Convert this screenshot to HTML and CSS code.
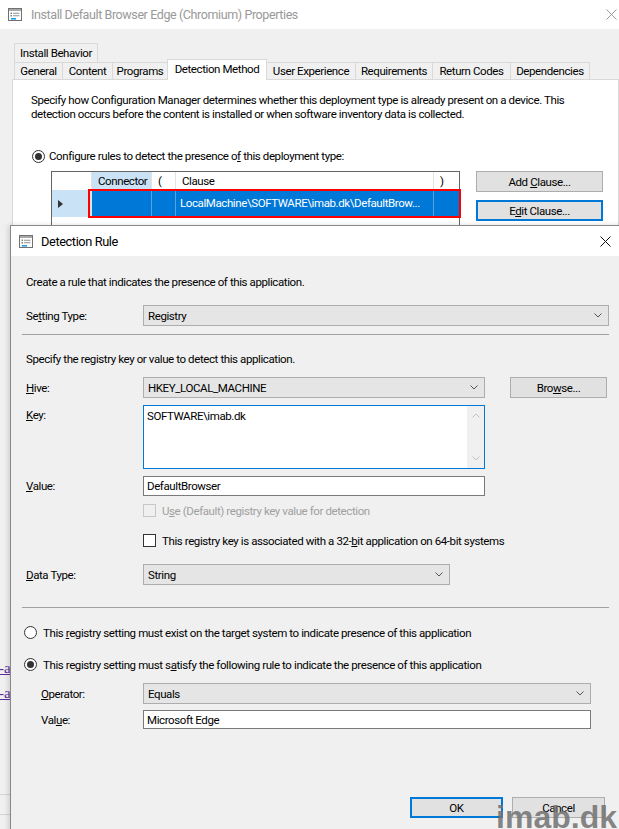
FILE: index.html
```html
<!DOCTYPE html>
<html>
<head>
<meta charset="utf-8">
<link rel="stylesheet" href="styles.css">
</head>
<body>
<div class="parent">
  <div class="ptitle">
    <svg class="wicon" width="14" height="13" viewBox="0 0 14 13"><rect x="0.5" y="0.5" width="13" height="12" fill="#fff" stroke="#707070"/><rect x="1" y="1" width="12" height="2" fill="#a8a8a8"/><rect x="2.5" y="4.5" width="1.5" height="1.5" fill="#808080"/><line x1="5" y1="5.25" x2="11.5" y2="5.25" stroke="#909090"/><rect x="2.5" y="7" width="1.5" height="1.5" fill="#808080"/><line x1="5" y1="7.75" x2="11.5" y2="7.75" stroke="#909090"/><rect x="3" y="10" width="5" height="1.6" fill="#1e9be8"/></svg>
    <span class="ptitle-text">Install Default Browser Edge (Chromium) Properties</span>
    <svg class="pclose" width="11" height="11" viewBox="0 0 11 11"><path d="M0.5 0.5L10.5 10.5M10.5 0.5L0.5 10.5" stroke="#9a9a9a" stroke-width="1" fill="none"/></svg>
  </div>
  <div class="pbody">
    <div class="tabs">
      <div class="tabrow top">
        <div class="tab t-ib">Install Behavior</div>
      </div>
      <div class="tabrow">
        <div class="tab t-gen">General</div>
        <div class="tab t-con">Content</div>
        <div class="tab t-pro">Programs</div>
        <div class="tab t-det active">Detection Method</div>
        <div class="tab t-ux">User Experience</div>
        <div class="tab t-req">Requirements</div>
        <div class="tab t-ret">Return Codes</div>
        <div class="tab t-dep">Dependencies</div>
      </div>
    </div>
    <div class="panel">
      <p class="desc">Specify how Configuration Manager determines whether this deployment type is already present on a device. This<br>detection occurs before the content is installed or when software inventory data is collected.</p>
      <div class="opt"><span class="radio on"></span><span>Configure rules to detect the presence o<u>f</u> this deployment type:</span></div>
      <div class="rules">
        <div class="grid">
          <div class="grow ghead">
            <div class="c c0"></div>
            <div class="c c1 hl">Connector</div>
            <div class="c c2">(</div>
            <div class="c c3">Clause</div>
            <div class="c c4">)</div>
          </div>
          <div class="grow gdata">
            <div class="c c0 rh"><span class="tri"></span></div>
            <div class="c c1 sel"></div>
            <div class="c c2 sel"></div>
            <div class="c c3 sel">LocalMachine\SOFTWARE\imab.dk\DefaultBrow...</div>
            <div class="c c4 sel"></div>
          </div>
          <div class="redbox"></div>
        </div>
        <div class="sidebtns">
          <div class="btn wide"><span>Add <u>C</u>lause...</span></div>
          <div class="btn wide focus"><span>E<u>d</u>it Clause...</span></div>
        </div>
      </div>
    </div>
  </div>
</div>
<div class="backdrop">
  <div class="blink l1">-a</div>
  <div class="blink l2">-a</div>
  <div class="bline b1"></div>
  <div class="bline b2"></div>
  <div class="bfoot"></div>
</div>

<div class="dialog">
  <div class="dtitle">
    <svg class="dicon" width="14" height="13" viewBox="0 0 14 13"><rect x="0.5" y="0.5" width="13" height="12" fill="#fff" stroke="#707070"/><rect x="1" y="1" width="12" height="2" fill="#a8a8a8"/><rect x="2.5" y="4.5" width="1.5" height="1.5" fill="#808080"/><line x1="5" y1="5.25" x2="11.5" y2="5.25" stroke="#909090"/><rect x="2.5" y="7" width="1.5" height="1.5" fill="#808080"/><line x1="5" y1="7.75" x2="11.5" y2="7.75" stroke="#909090"/><rect x="3" y="10" width="5" height="1.6" fill="#1e9be8"/></svg>
    <span class="dtitle-text">Detection Rule</span>
    <svg class="dclose" width="11" height="11" viewBox="0 0 11 11"><path d="M0.5 0.5L10.5 10.5M10.5 0.5L0.5 10.5" stroke="#111" stroke-width="1" fill="none"/></svg>
  </div>
  <div class="dbody">
    <p class="dtext t1">Create a rule that indicates the presence of this application.</p>
    <div class="frow r-setting">
      <span class="flabel">Se<u>t</u>ting Type:</span>
      <div class="combo w-full"><span>Registry</span><svg class="chev" width="8" height="5" viewBox="0 0 8 5"><polyline points="0.5,0.5 4,4 7.5,0.5" fill="none" stroke="#555"/></svg></div>
    </div>
    <div class="sep s1"></div>
    <p class="dtext t2">Specify the registry key or value to detect this application.</p>
    <div class="frow r-hive">
      <span class="flabel"><u>H</u>ive:</span>
      <div class="combo w-mid"><span>HKEY_LOCAL_MACHINE</span><svg class="chev" width="8" height="5" viewBox="0 0 8 5"><polyline points="0.5,0.5 4,4 7.5,0.5" fill="none" stroke="#555"/></svg></div>
      <div class="btn browse"><span>Bro<u>w</u>se...</span></div>
    </div>
    <div class="frow r-key">
      <span class="flabel top"><u>K</u>ey:</span>
      <div class="memo w-mid">
        <span class="memo-text">SOFTWARE\imab.dk</span>
        <div class="vscroll">
          <svg width="8" height="5" viewBox="0 0 8 5"><polyline points="0.5,4.5 4,1 7.5,4.5" fill="none" stroke="#c2c2c2"/></svg>
          <svg width="8" height="5" viewBox="0 0 8 5"><polyline points="0.5,0.5 4,4 7.5,0.5" fill="none" stroke="#c2c2c2"/></svg>
        </div>
      </div>
    </div>
    <div class="frow r-value">
      <span class="flabel"><u>V</u>alue:</span>
      <div class="edit w-mid">DefaultBrowser</div>
    </div>
    <div class="crow r-chk1 disabled"><span class="chk"></span><span>U<u>s</u>e (Default) registry key value for detection</span></div>
    <div class="crow r-chk2"><span class="chk"></span><span>This registry key is associated with a 32-<u>b</u>it application on 64-bit systems</span></div>
    <div class="frow r-dtype">
      <span class="flabel"><u>D</u>ata Type:</span>
      <div class="combo w-small"><span>String</span><svg class="chev" width="8" height="5" viewBox="0 0 8 5"><polyline points="0.5,0.5 4,4 7.5,0.5" fill="none" stroke="#555"/></svg></div>
    </div>
    <div class="sep s2"></div>
    <div class="rrow r-rad1"><span class="radio"></span><span>This <u>r</u>egistry setting must exist on the target system to indicate presence of this application</span></div>
    <div class="rrow r-rad2"><span class="radio on"></span><span>This registry setting must s<u>a</u>tisfy the following rule to indicate the presence of this application</span></div>
    <div class="frow sub r-op">
      <span class="flabel"><u>O</u>perator:</span>
      <div class="combo w-wide"><span>Equals</span><svg class="chev" width="8" height="5" viewBox="0 0 8 5"><polyline points="0.5,0.5 4,4 7.5,0.5" fill="none" stroke="#555"/></svg></div>
    </div>
    <div class="frow sub r-val2">
      <span class="flabel">Val<u>u</u>e:</span>
      <div class="edit w-wide">Microsoft Edge</div>
    </div>
    <div class="r-btns">
      <div class="btn dlg focus"><span>OK</span></div>
      <div class="btn dlg"><span>Cancel</span></div>
    </div>
  </div>
</div>
<div class="watermark">imab.dk</div>
</body>
</html>
```

FILE: styles.css
```css
* { box-sizing: border-box; }
html, body { margin: 0; padding: 0; }
body {
  width: 619px;
  height: 829px;
  overflow: hidden;
  position: relative;
  background: #f0f0f0;
  font-family: Roboto, "Liberation Sans", sans-serif;
  font-size: 11.5px;
  letter-spacing: -0.4px;
  color: #000;
}
u { text-decoration: underline; text-underline-offset: 1px; }

/* parent window */
.parent { height: 650px; overflow: hidden; }
.ptitle {
  height: 29px;
  background: #fff;
  display: flex;
  align-items: center;
  padding-left: 8px;
}
.wicon, .dicon { flex: none; display: block; }
.ptitle-text { margin-left: 9px; color: #999; font-size: 12.5px; letter-spacing: -0.4px; }
.pclose { margin-left: auto; margin-right: 2px; display: block; }

.pbody { padding: 14px 0 0 12px; }
.tabs { padding-left: 2px; }
.tabrow { display: flex; }
.tabrow.top .tab { height: 19px; }
.tab {
  height: 17px;
  border: 1px solid #d9d9d9;
  border-bottom: none;
  margin-right: -1px;
  display: flex;
  align-items: center;
  justify-content: center;
  background: #f0f0f0;
  white-space: nowrap;
}
.tab.active {
  height: 21px;
  margin-top: -3px;
  margin-bottom: -1px;
  background: #fff;
  position: relative;
  z-index: 2;
  align-items: flex-start;
  padding-top: 2px;
}
.t-ib { width: 84px; }
.t-gen { width: 49px; }
.t-con { width: 51px; }
.t-pro { width: 56px; }
.t-det { width: 100px; }
.t-ux { width: 90px; }
.t-req { width: 78px; }
.t-ret { width: 79px; }
.t-dep { width: 80px; }

.panel {
  width: 607px;
  height: 580px;
  border: 1px solid #d9d9d9;
  background: #fff;
  padding: 13px 0 0 18px;
}
.desc { margin: 0; line-height: 14px; white-space: nowrap; }
.opt {
  display: flex;
  align-items: center;
  gap: 4px;
  height: 14px;
  margin: 28px 0 0 1px;
}

.radio {
  width: 13px;
  height: 13px;
  border: 1px solid #333;
  border-radius: 50%;
  background: #fff;
  flex: none;
  display: flex;
  align-items: center;
  justify-content: center;
}
.radio.on::after {
  content: "";
  width: 7px;
  height: 7px;
  border-radius: 50%;
  background: #333;
}

.rules { display: flex; margin: 8px 0 0 20px; }
.grid {
  width: 409px;
  height: 60px;
  border: 1px solid #646464;
  background: #fff;
  position: relative;
}
.grow { display: flex; }
.ghead { height: 18px; line-height: 18px; }
.gdata { height: 27px; line-height: 27px; }
.c { flex: none; border-right: 1px solid #e3e3e3; padding-left: 6px; white-space: nowrap; overflow: hidden; }
.c0 { width: 40px; }
.c1 { width: 60px; }
.c2 { width: 24px; }
.c3 { width: 258px; }
.c4 { flex: 1; border-right: none; }
.hl { background: #c9e2f6; }
.rh { background: #c9e2f6; display: flex; align-items: center; }
.tri {
  width: 0;
  height: 0;
  border-top: 4px solid transparent;
  border-bottom: 4px solid transparent;
  border-left: 5px solid #333;
}
.sel { background: #0078d7; color: #fff; border-right-color: #5a9fe0; }
.c3.sel { padding-left: 4px; }
.redbox {
  position: absolute;
  left: 36px;
  top: 17px;
  width: 373px;
  height: 29px;
  border: 2px solid #f00;
}
.sidebtns { margin-left: 16px; display: flex; flex-direction: column; gap: 8px; }

.btn {
  height: 21px;
  background: #e1e1e1;
  border: 1px solid #adadad;
  display: flex;
  align-items: center;
  justify-content: center;
  white-space: nowrap;
}
.btn.focus { border: 2px solid #0078d7; }
.btn.wide { width: 127px; }

/* backdrop strip at left */
.backdrop { height: 179px; position: relative; }
.blink {
  color: #5b2f99;
  text-decoration: underline;
  font-family: "Liberation Serif", serif;
  font-size: 15px;
  letter-spacing: 0;
  line-height: 14px;
  margin-left: -1px;
}
.l1 { margin-top: 11px; }
.l2 { margin-top: 11px; }
.bline { height: 1px; background: #d4d4d4; }
.b1 { margin-top: 94px; }
.b2 { margin-top: 19px; }
.bfoot { margin-top: 18px; height: 30px; background: #e4e4e4; }

/* dialog */
.dialog {
  position: absolute;
  left: 10px;
  top: 225px;
  width: 630px;
  height: 620px;
  border-left: 1px solid #888;
  border-top: 1px solid #888;
  background: #f0f0f0;
  box-shadow: -2px 0 5px rgba(0, 0, 0, 0.13);
}
.dtitle {
  height: 30px;
  background: #fff;
  display: flex;
  align-items: center;
  padding-left: 8px;
}
.dtitle-text { margin-left: 8px; font-size: 12.8px; }
.dclose { margin-left: auto; margin-right: 29px; display: block; }

.dbody { padding: 0 31px 0 15px; }
.dtext { margin: 0; line-height: 16px; height: 16px; white-space: nowrap; }
.t1 { margin-top: 18px; }
.t2 { margin-top: 16px; }
.sep { height: 1px; background: #a0a0a0; margin-left: -4px; }
.s1 { margin-top: 8px; }
.s2 { margin-top: 22px; }

.frow { display: flex; align-items: center; }
.flabel { width: 117px; flex: none; white-space: nowrap; }
.flabel.top { align-self: flex-start; padding-top: 3px; }
.frow.sub { padding-left: 15px; }
.frow.sub .flabel { width: 102px; }

.combo {
  height: 21px;
  background: #e5e5e5;
  border: 1px solid #adadad;
  display: flex;
  align-items: center;
  justify-content: space-between;
  padding: 0 6px 0 4px;
}
.chev { display: block; }
.edit {
  height: 20px;
  background: #fff;
  border: 1px solid #7a7a7a;
  display: flex;
  align-items: center;
  padding-left: 3px;
}
.memo {
  height: 64px;
  background: #fff;
  border: 1px solid #0078d7;
  display: flex;
  justify-content: space-between;
}
.memo-text { padding: 3px 0 0 3px; }
.vscroll {
  width: 17px;
  background: #f0f0f0;
  display: flex;
  flex-direction: column;
  align-items: center;
  justify-content: space-between;
  padding: 7px 0 7px;
}
.vscroll svg { display: block; }

.w-full { flex: 1; }
.w-mid { width: 342px; flex: none; }
.w-small { width: 307px; flex: none; }
.w-wide { width: 448px; flex: none; }
.browse { width: 97px; margin-left: 25px; }

.r-setting { margin-top: 15px; }
.r-hive { margin-top: 10px; }
.r-key { margin-top: 7px; }
.r-value { margin-top: 7px; }
.r-dtype { margin-top: 17px; }
.r-op { margin-top: 12px; }
.r-val2 { margin-top: 6px; }
.r-val2 .edit { height: 19px; }

.crow {
  display: flex;
  align-items: center;
  gap: 6px;
  height: 13px;
  padding-left: 117px;
  white-space: nowrap;
}
.chk {
  width: 13px;
  height: 13px;
  border: 1px solid #333;
  background: #fff;
  flex: none;
}
.crow.disabled { color: #a0a0a0; }
.crow.disabled .chk { border-color: #c8c8c8; background: transparent; }
.r-chk1 { margin-top: 8px; }
.r-chk2 { margin-top: 17px; }

.rrow {
  display: flex;
  align-items: center;
  gap: 6px;
  height: 13px;
  margin-left: -2px;
  white-space: nowrap;
}
.r-rad1 { margin-top: 18px; }
.r-rad2 { margin-top: 19px; }

.r-btns {
  margin-top: 68px;
  display: flex;
  justify-content: flex-end;
  gap: 9px;
  padding-right: 4px;
}
.btn.dlg { width: 93px; }

.watermark {
  position: absolute;
  right: 2px;
  bottom: -7px;
  font-family: "Liberation Sans", sans-serif;
  font-weight: bold;
  font-size: 32px;
  letter-spacing: 0;
  color: rgba(112, 112, 112, 0.85);
}
```
